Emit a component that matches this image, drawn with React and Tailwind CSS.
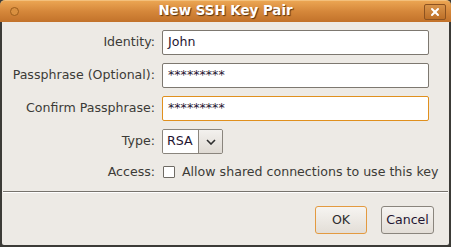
import { X } from 'lucide-react'

const font = { fontFamily: '"DejaVu Sans", "Liberation Sans", sans-serif' }

function Field({ label, value, focused }) {
  return (
    <div className="flex items-center h-[25px]">
      <label className="w-[153px] shrink-0 text-right text-[#3c3b37]">{label}</label>
      <div
        className={`ml-[7px] w-[267px] h-[25px] flex items-center px-[5px] rounded-[2px] bg-white border ${
          focused ? 'border-[#e0901e]' : 'border-[#7d7870]'
        } text-[#1f1632]`}
      >
        {value}
      </div>
    </div>
  )
}

export default function App() {
  return (
    <div className="w-[451px] h-[247px] flex flex-col bg-[#3c3b37] text-[12.6px]" style={font}>
      {/* Title bar */}
      <div className="h-[22px] shrink-0 relative flex items-center justify-center rounded-t-[5px] bg-gradient-to-b from-[#eba552] via-[#d5873a] to-[#c2722a] border-t border-[#f3c07c]">
        <span className="absolute left-[10px] top-[6px] w-[9px] h-[9px] rounded-full border border-[#9c5d1c] bg-[#d99040]" />
        <span
          className="text-white font-bold text-[13.4px]"
          style={{ textShadow: '1px 1px 1px #5a3410' }}
        >
          New SSH Key Pair
        </span>
        <span className="absolute right-[5px] top-[3px] w-[22px] h-[16px] rounded-[2px] border border-[#8c5220] bg-gradient-to-b from-[#d8944a] to-[#bd6f27] flex items-center justify-center">
          <X size={12} strokeWidth={4} className="text-white" />
        </span>
      </div>

      {/* Body */}
      <div className="flex-1 mx-[2px] mb-[2px] bg-[#edeae5] flex flex-col rounded-b-[2px]">
        <div className="flex flex-col gap-[8px] pt-[8px]">
          <Field label="Identity:" value="John" />
          <Field label="Passphrase (Optional):" value="*********" />
          <Field label="Confirm Passphrase:" value="*********" focused />
          <div className="flex items-center h-[25px]">
            <label className="w-[153px] shrink-0 text-right text-[#3c3b37]">Type:</label>
            <div className="ml-[7px] w-[61px] h-[25px] flex rounded-[2px] border border-[#8a857d] overflow-hidden">
              <div className="w-[36px] bg-white flex items-center pl-[4px] text-[#1f1632] border-r border-[#8a857d]">RSA</div>
              <div className="flex-1 bg-gradient-to-b from-[#f3f1ee] to-[#dfdad3] flex items-center justify-center">
                <svg width="10" height="6" viewBox="0 0 10 6">
                  <path d="M1 1 L5 5 L9 1" fill="none" stroke="#2e2e2e" strokeWidth="1.6" />
                </svg>
              </div>
            </div>
          </div>
          <div className="flex items-center h-[14px] mt-[3px]">
            <label className="w-[153px] shrink-0 text-right text-[#3c3b37]">Access:</label>
            <span className="ml-[8px] w-[12px] h-[12px] border border-[#6f6b64] bg-white rounded-[1px]" />
            <span className="ml-[7px] text-[#3c3b37]">Allow shared connections to use this key</span>
          </div>
        </div>

        <div className="mt-[12px] mx-[1px] h-[2px] bg-[#77736d] border-b border-[#ffffff]" />

        <div className="flex justify-end gap-[14px] pr-[15px] pt-[13px]">
          <button className="w-[52px] h-[28px] rounded-[3px] border border-[#e39a40] bg-gradient-to-b from-[#f6f4f1] to-[#e3ded7] text-[#2e2e2e]">
            OK
          </button>
          <button className="w-[53px] h-[28px] rounded-[3px] border border-[#8a857d] bg-gradient-to-b from-[#f6f4f1] to-[#e3ded7] text-[#1f1632]">
            Cancel
          </button>
        </div>
      </div>
    </div>
  )
}
